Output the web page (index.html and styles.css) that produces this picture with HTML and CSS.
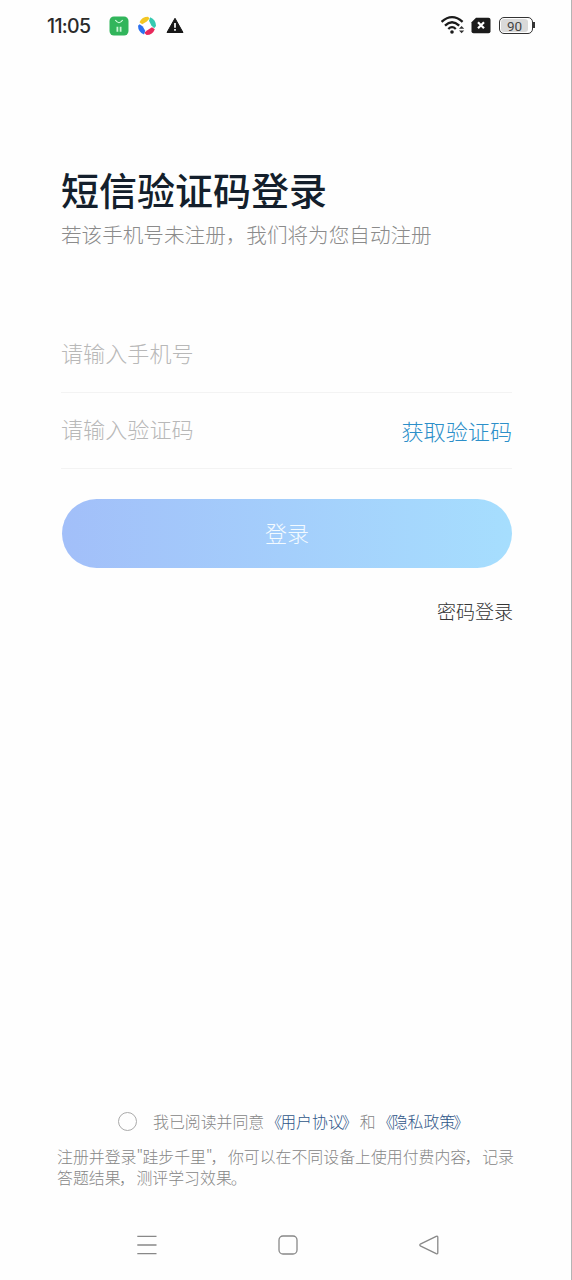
FILE: index.html
```html
<!DOCTYPE html>
<html lang="zh-CN">
<head>
<meta charset="utf-8">
<title>短信验证码登录</title>
<link rel="stylesheet" href="styles.css">
</head>
<body>
<div class="screen">
  <header class="status">
    <span class="clock">11:05</span>
    <svg class="app-icon" width="20" height="20" viewBox="0 0 20 20">
      <rect x=".5" y=".5" width="19" height="19" rx="4.5" fill="#31b55b"/>
      <path d="M6.3 4Q10 9.4 13.7 4" fill="none" stroke="#d8ffe2" stroke-width="1.1"/>
      <path d="M7.5 10.8h1.8v4.9H7.5zM10.7 10.8h1.8v4.9h-1.8z" fill="#c9f5d5"/>
    </svg>
    <svg class="wheel-icon" width="20" height="20" viewBox="0 0 20 20">
      <path d="M2.5 6.2Q5 .8 11 .8L12.6 2.6 9.8 5.4 5.2 8.2Z" fill="#f3c623"/>
      <path d="M13.2 1.3Q18.8 3.6 19 10L17.2 12.2 14.4 9.6 12 4.8Z" fill="#35c9b0"/>
      <path d="M17.8 13.2Q15.8 18.8 9.6 19.1L7.2 16.8 10.3 14.3 15 11.2Z" fill="#e8285b"/>
      <path d="M7 18.5Q1 15.8 1 9.8L2.6 8.2 5.8 10.6 8.2 14.8Z" fill="#2b70ef"/>
    </svg>
    <svg class="warn-icon" width="18" height="17" viewBox="0 0 18 17">
      <path d="M9 1.3 17 15.5H1Z" fill="#171717" stroke="#171717" stroke-linejoin="round"/>
      <path d="M9 6v4.7M9 12v1.8" stroke="#fff" stroke-width="1.7"/>
    </svg>
    <svg class="wifi-icon" width="24" height="20" viewBox="0 0 24 20">
      <g fill="none" stroke="#1b1b1b" stroke-width="2.3">
        <path d="M.6 6.8Q11-2.6 21.6 6.8"/>
        <path d="M4 10.6Q11 4 18.2 10.6"/>
        <path d="M7.3 14Q11 10.3 14.8 14"/>
      </g>
      <circle cx="11" cy="17" r="1.8" fill="#1b1b1b"/>
      <path d="M18 13.8 20.6 11l2.6 2.8ZM18 15.4l2.6 2.8 2.6-2.8Z" fill="#333"/>
    </svg>
    <svg class="sim-icon" width="20" height="17" viewBox="0 0 20 17">
      <path d="M5 .8h12.5q2 0 2 2v11.4q0 2-2 2H2.5q-2 0-2-2V5.3Z" fill="#1b1b1b"/>
      <path d="m7 5.2 6 6m0-6-6 6" stroke="#fff" stroke-width="2.2"/>
    </svg>
    <div class="battery"><span class="level">90</span></div>
  </header>

  <main class="login">
    <h1 class="title">短信验证码登录</h1>
    <p class="subtitle">若该手机号未注册，我们将为您自动注册</p>
    <div class="field phone">请输入手机号</div>
    <div class="field code"><span>请输入验证码</span><a class="get-code">获取验证码</a></div>
    <div class="submit">登录</div>
    <a class="password-login">密码登录</a>
  </main>

  <footer class="legal">
    <div class="agree"><span class="radio"></span><span class="terms">我已阅读并同意<a><span class="mark open">《</span>用户协议<span class="mark close">》</span></a>和<a><span class="mark open">《</span>隐私政策<span class="mark close">》</span></a></span></div>
    <p class="note">注册并登录<span class="quote">"</span>跬步千里<span class="quote">"</span><span class="comma">，</span>你可以在不同设备上使用付费内容<span class="comma">，</span>记录<br>答题结果<span class="comma">，</span>测评学习效果<span class="stop">。</span></p>
  </footer>

  <nav class="navbar">
    <svg width="22" height="22" viewBox="0 0 22 22"><path d="M1.3 2.4h19.2M1.3 11h19.2M1.3 19.7h19.2"/></svg>
    <svg width="22" height="22" viewBox="0 0 22 22"><rect x="2" y="2" width="18" height="18" rx="4"/></svg>
    <svg width="22" height="22" viewBox="0 0 22 22"><path d="M18.2 2.4 2.8 9.8q-2 1.1 0 2.3l15.4 7.5q1.6.7 1.6-.8V3.2q0-1.5-1.6-.8Z"/></svg>
  </nav>
</div>
</body>
</html>
```
FILE: styles.css
```css
* { box-sizing: border-box; }
body { margin: 0; background: #fefefe; }
.screen {
  display: flex;
  flex-direction: column;
  width: 572px;
  height: 1280px;
  border-right: 1px solid #b4b4b4;
  font-family: "Noto Sans CJK SC", sans-serif;
  font-weight: 300;
  text-spacing-trim: space-all;
}
.status {
  display: flex;
  align-items: center;
  height: 52px;
  padding: 0 38px 0 47px;
}
.clock {
  width: 62px;
  font: 500 19.5px/24px Inter, sans-serif;
  letter-spacing: -0.7px;
  color: #2a2a2a;
}
.wheel-icon { margin-left: 8px; }
.warn-icon { margin: -2px 0 0 9px; }
.wifi-icon { margin: -2px 0 0 auto; }
.sim-icon { margin: -2px 0 0 6px; }
.battery {
  position: relative;
  width: 34px;
  height: 17px;
  margin: -1px 0 0 8px;
  padding: 1px;
  border: 1.5px solid #333;
  border-radius: 5px;
}
.battery::after {
  content: "";
  position: absolute;
  top: 4px;
  right: -3px;
  width: 2px;
  height: 6px;
  background: #333;
}
.level {
  display: block;
  width: 27px;
  height: 13px;
  border-radius: 3px;
  background: #d9d9d9;
  font: 400 13.5px/14px Roboto, sans-serif;
  text-align: center;
  color: #444;
}
.login {
  display: flex;
  flex-direction: column;
  padding: 110px 59px 0 61px;
}
.title {
  margin: 0;
  font-size: 38px;
  font-weight: 500;
  line-height: 54px;
  color: #141f2c;
}
.subtitle {
  margin: 3px 0 0;
  font-size: 20.6px;
  line-height: 30px;
  color: #8b8b8b;
}
.field {
  display: flex;
  justify-content: space-between;
  align-items: center;
  padding-bottom: 4px;
  border-bottom: 1px solid #f3f3f3;
  font-size: 22.1px;
  color: #b8b8b8;
}
.phone { height: 77px; margin-top: 67px; }
.code { height: 76px; padding-bottom: 5px; }
.get-code { padding-top: 3px; color: #2c8fc9; }
.submit {
  height: 69px;
  margin: 30px 0 0 1px;
  border-radius: 35px;
  background: linear-gradient(90deg, #a2bff9, #a6defe);
  font-size: 22px;
  line-height: 66px;
  text-align: center;
  color: #f3faff;
}
.password-login {
  align-self: flex-end;
  margin: 29px -1px 0 0;
  font-size: 19px;
  line-height: 28px;
  color: #343434;
}
.legal {
  margin-top: auto;
  padding: 0 57px;
  font-size: 15.9px;
  color: #868686;
}
.agree { display: flex; align-items: center; height: 24px; padding-left: 61px; }
.radio { width: 19px; height: 19px; margin-top: -1px; border: 1px solid #aaa; border-radius: 50%; }
.terms { margin: -2px 0 0 16px; white-space: nowrap; }
.terms a { color: #2f5688; }
.mark { display: inline-block; width: 16px; }
.open { text-indent: 2px; }
.close { text-indent: -2px; }
.comma, .stop { display: inline-block; width: 1em; text-indent: -1.5px; }
.stop { text-indent: -1px; }
.note { margin: 12px -20px 1px 0; line-height: 21px; white-space: nowrap; }
.quote { display: inline-block; width: 6px; }
.navbar {
  display: flex;
  justify-content: space-between;
  height: 91px;
  padding: 45px 131px 0 136px;
}
.navbar svg { fill: none; stroke: #888; stroke-width: 1.3; }
```
